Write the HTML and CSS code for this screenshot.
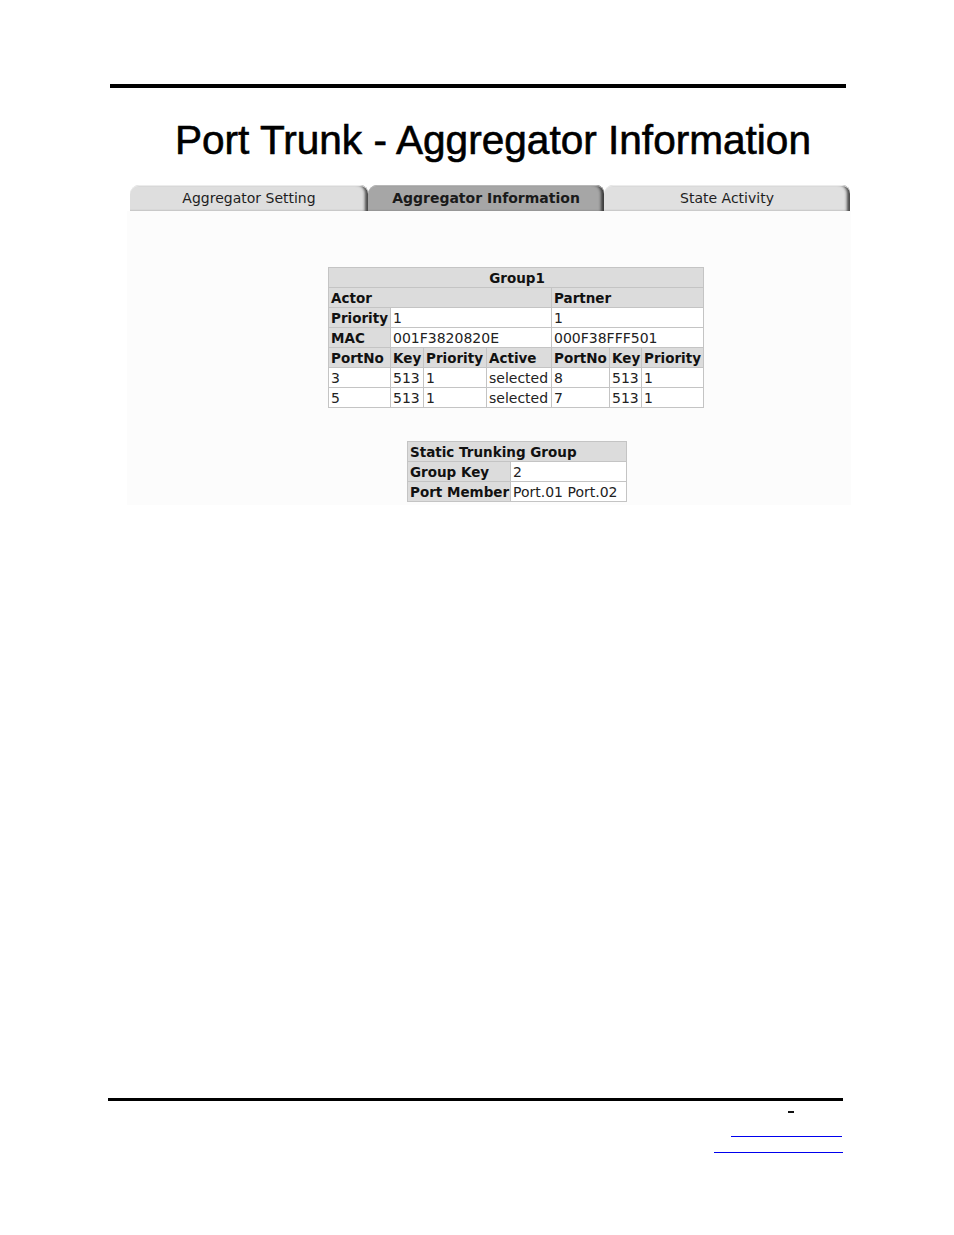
FILE: index.html
```html
<!DOCTYPE html>
<html>
<head>
<meta charset="utf-8">
<link rel="stylesheet" href="styles.css">
</head>
<body>
<div class="page">
  <div class="rule-top"></div>
  <h1 class="title">Port Trunk - Aggregator Information</h1>
  <div class="tabs">
    <div class="tab tab-1">Aggregator Setting</div>
    <div class="tab tab-2 active">Aggregator Information</div>
    <div class="tab tab-3">State Activity</div>
  </div>
  <div class="content">
    <table class="grid group">
      <colgroup>
        <col class="c62"><col class="c33"><col class="c63"><col class="c65"><col class="c58"><col class="c32"><col class="c62">
      </colgroup>
      <tr><th colspan="7" class="center">Group1</th></tr>
      <tr><th colspan="4">Actor</th><th colspan="3">Partner</th></tr>
      <tr><th>Priority</th><td colspan="3">1</td><td colspan="3">1</td></tr>
      <tr><th>MAC</th><td colspan="3">001F3820820E</td><td colspan="3">000F38FFF501</td></tr>
      <tr><th>PortNo</th><th>Key</th><th>Priority</th><th>Active</th><th>PortNo</th><th>Key</th><th>Priority</th></tr>
      <tr><td>3</td><td>513</td><td>1</td><td>selected</td><td>8</td><td>513</td><td>1</td></tr>
      <tr><td>5</td><td>513</td><td>1</td><td>selected</td><td>7</td><td>513</td><td>1</td></tr>
    </table>
    <table class="grid static">
      <colgroup><col class="c103"><col class="c116"></colgroup>
      <tr><th colspan="2">Static Trunking Group</th></tr>
      <tr><th>Group Key</th><td>2</td></tr>
      <tr><th>Port Member</th><td>Port.01 Port.02</td></tr>
    </table>
  </div>
  <div class="footer">
    <div class="rule-bottom"></div>
    <div class="foot-line dash-line"><span class="dash"></span></div>
    <div class="foot-line"><a class="link link-1" href="#"></a></div>
    <div class="foot-line"><a class="link link-2" href="#"></a></div>
  </div>
</div>
</body>
</html>
```

FILE: styles.css
```css
html, body {
  margin: 0;
  padding: 0;
  background: #ffffff;
}

.page {
  width: 954px;
  padding-top: 84px;
  font-family: "DejaVu Sans", Verdana, sans-serif;
  color: #000;
}

.rule-top {
  margin-left: 110px;
  width: 736px;
  height: 4px;
  background: #000;
}

.title {
  margin: 29px 0 0 130px;
  width: 720px;
  box-sizing: border-box;
  padding-left: 6px;
  text-align: center;
  font-family: "Liberation Sans", Arial, sans-serif;
  font-weight: normal;
  font-size: 40.6px;
  line-height: 46px;
  color: #000;
  -webkit-text-stroke: 0.6px #000;
}

.tabs {
  margin: 22px 0 0 130px;
  width: 720px;
  display: flex;
  height: 26px;
}

.tab {
  height: 26px;
  line-height: 26px;
  text-align: center;
  font-size: 14px;
  color: #1e1e1e;
  background: #dedede;
  border-radius: 9px 8px 0 0;
  box-shadow: inset 0 1px 0 #ececec, inset -4px 0 3px -1px #4a4a4a;
  box-sizing: border-box;
}

.tab-1 { width: 238px; }
.tab-2 { width: 236px; }
.tab-3 { width: 246px; background: #e0e0e0; }

.tab.active {
  background: #a6a6a6;
  font-weight: bold;
  color: #1a1a1a;
  box-shadow: inset 0 1px 0 #b8b8b8, inset -4px 0 3px -1px #3c3c3c;
}

.content {
  margin-left: 127px;
  width: 724px;
  background: #fcfcfc;
  box-sizing: border-box;
  padding: 56px 0 3px 0;
  display: flex;
  flex-direction: column;
  align-items: flex-start;
  gap: 33px;
}

.grid {
  border-collapse: collapse;
  table-layout: fixed;
  font-size: 14px;
  background: #fff;
}

.grid th,
.grid td {
  border: 1px solid #c4c4c4;
  height: 19px;
  line-height: 18px;
  padding: 0 0 0 2px;
  text-align: left;
  white-space: nowrap;
  overflow: hidden;
}

.grid th {
  background: #dcdcdc;
  font-weight: bold;
  font-size: 13.5px;
  color: #111;
}

.grid td {
  background: #fff;
  color: #222;
}

.grid th.center { text-align: center; }

.group { width: 375px; margin-left: 201px; }
.static { width: 219px; margin-left: 280px; }

.c62 { width: 62px; }
.c33 { width: 33px; }
.c63 { width: 63px; }
.c65 { width: 65px; }
.c58 { width: 58px; }
.c32 { width: 32px; }
.c103 { width: 103px; }
.c116 { width: 116px; }

.footer {
  margin-top: 593px;
  margin-left: 108px;
  width: 735px;
}

.rule-bottom {
  height: 3px;
  background: #000;
}

.foot-line {
  display: flex;
  justify-content: flex-end;
}

.dash-line {
  height: 12px;
  padding-right: 49px;
  align-items: flex-end;
}

.dash {
  display: block;
  width: 6px;
  height: 2px;
  background: #111;
}

.link {
  display: block;
  height: 15px;
  border-bottom: 1px solid #0000ee;
  text-decoration: none;
}

.link-1 { width: 111px; margin-right: 1px; margin-top: 8px; }
.link-2 { width: 129px; }
```
